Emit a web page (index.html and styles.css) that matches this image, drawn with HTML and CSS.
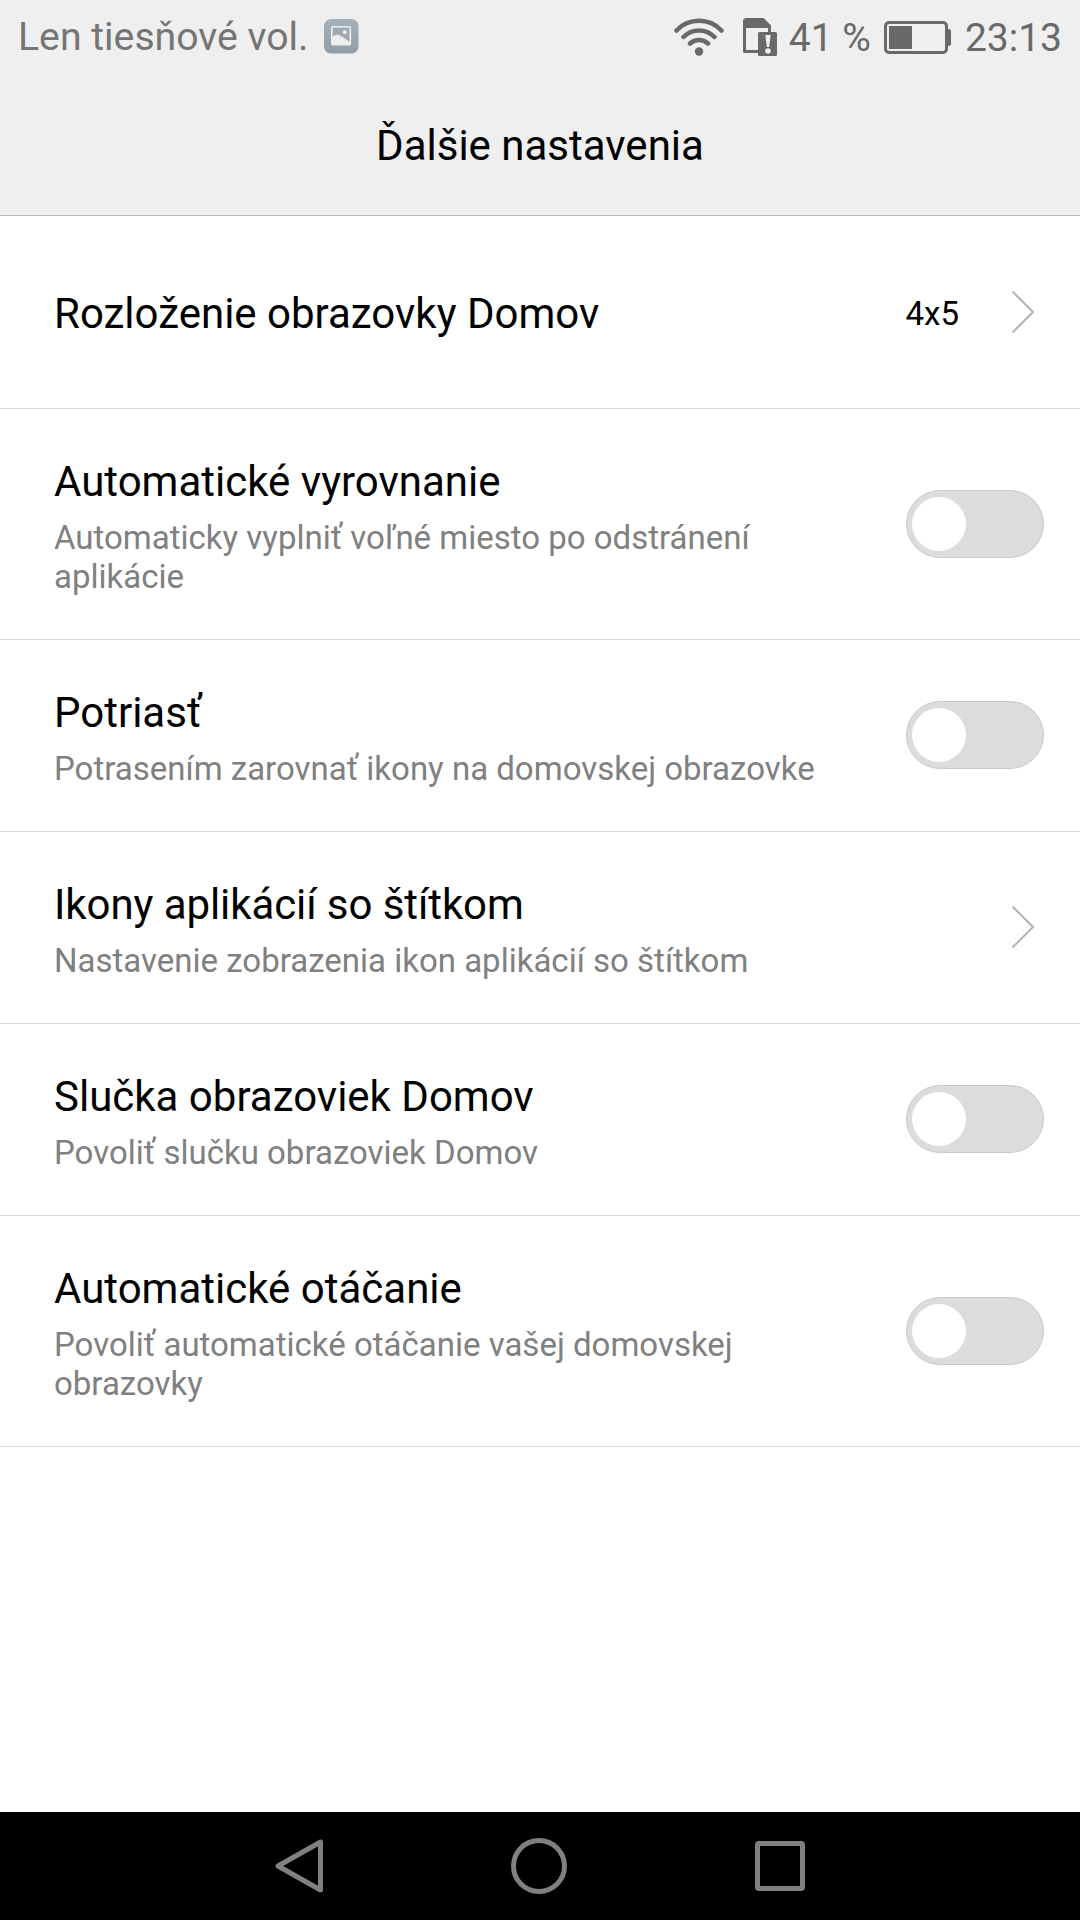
FILE: index.html
```html
<!DOCTYPE html>
<html lang="sk">

<head>
    <meta charset="utf-8">
    <meta name="viewport" content="width=device-width, initial-scale=1">
    <title>Ďalšie nastavenia</title>
    <link rel="stylesheet" href="styles.css">
</head>

<body>
    <header>
        <div class="statusbar">
            <span class="carrier">Len tiesňové vol.</span>
            <svg class="picture" width="35" height="35" viewBox="0 0 35 35">
                <defs>
                    <linearGradient id="shade" x1="0" y1="0" x2="0" y2="1">
                        <stop offset="0" stop-color="#a5b0b8"/>
                        <stop offset="1" stop-color="#939da5"/>
                    </linearGradient>
                </defs>
                <rect width="34.5" height="34.5" rx="7" fill="url(#shade)"/>
                <rect x="7.8" y="7.8" width="18.5" height="18" rx="1" fill="none" stroke="#eee" stroke-width="1.6"/>
                <path d="M8 18c2-1 3-2.5 6-2.5c2 0 2 2 4 2l8 5.500v3H8z" fill="#eee"/>
                <circle cx="20.7" cy="13.3" r="2" fill="#eee"/>
            </svg>
            <div class="status-right">
                <svg class="wifi" width="50" height="38" viewBox="0 0 50 38">
                    <path d="M2.5 12.5a31 31 0 0 1 45 0M9.5 19a21.7 21.7 0 0 1 31 0M16 25.500a13.300 13.300 0 0 1 18 0" fill="none" stroke="#696969" stroke-width="4.5" stroke-linecap="round"/>
                    <circle cx="25" cy="33.5" r="4.2" fill="#696969"/>
                </svg>
                <svg class="sim" width="34" height="38" viewBox="0 0 34 38">
                    <path d="M1.5 1.500h18.500l6.500 6.500v8M1.500 1.500v32h14" fill="none" stroke="#696969" stroke-width="3" stroke-linejoin="round"/>
                    <path d="M2 1h18l7 7v2H2z" fill="#696969"/>
                    <rect x="15" y="14" width="19" height="24" rx="1.5" fill="#696969"/>
                    <path d="M22.3 17h5.400l-1.500 12h-2.400z" fill="#efefef"/>
                    <circle cx="25" cy="33" r="2.8" fill="#efefef"/>
                </svg>
                <span class="percent">41 %</span>
                <svg class="battery" width="67" height="33" viewBox="0 0 67 33">
                    <rect x="1.5" y="1.5" width="61" height="30" rx="3.5" fill="none" stroke="#696969" stroke-width="3"/>
                    <path d="M5 5h23v23H5zM63 8h2.500l1.500 1.500v14l-1.500 1.500H63z" fill="#696969"/>
                </svg>
                <span class="time">23:13</span>
            </div>
        </div>
        <h1 class="title">Ďalšie nastavenia</h1>
    </header>

    <ul class="settings">
        <li class="one">
            <div class="text"><h2>Rozloženie obrazovky Domov</h2></div>
            <span class="value">4x5</span>
            <svg class="arrow" width="24" height="42" viewBox="0 0 24 42"><path d="M1.5 .5L22 21L1.5 41.5"/></svg>
        </li>
        <li class="two">
            <div class="text"><h2>Automatické vyrovnanie</h2><p>Automaticky vyplniť voľné miesto po odstránení<br>aplikácie</p></div>
            <div class="switch"></div>
        </li>
        <li>
            <div class="text"><h2>Potriasť</h2><p>Potrasením zarovnať ikony na domovskej obrazovke</p></div>
            <div class="switch"></div>
        </li>
        <li>
            <div class="text"><h2 class="tight">Ikony aplikácií so štítkom</h2><p>Nastavenie zobrazenia ikon aplikácií so štítkom</p></div>
            <svg class="arrow" width="24" height="42" viewBox="0 0 24 42"><path d="M1.5 .5L22 21L1.5 41.5"/></svg>
        </li>
        <li>
            <div class="text"><h2>Slučka obrazoviek Domov</h2><p>Povoliť slučku obrazoviek Domov</p></div>
            <div class="switch"></div>
        </li>
        <li class="two">
            <div class="text"><h2>Automatické otáčanie</h2><p>Povoliť automatické otáčanie vašej domovskej<br>obrazovky</p></div>
            <div class="switch"></div>
        </li>
    </ul>

    <nav class="navbar">
        <svg width="48" height="54" viewBox="0 0 48 54"><path d="M45.5 3v48L3 27z"/></svg>
        <svg width="56" height="56" viewBox="0 0 56 56"><circle cx="28" cy="28" r="25.5"/></svg>
        <svg width="50" height="50" viewBox="0 0 50 50"><rect x="2.5" y="2.5" width="45" height="45" rx="1.5"/></svg>
    </nav>
</body>
</html>
```
FILE: styles.css
```css
*{
    box-sizing: border-box;
}
body{
    margin: 0;
    width: 1080px;
    height: 1920px;
    display: flex;
    flex-direction: column;
    background: white;
    color: black;
    font-family: Roboto, sans-serif;
}
header {
    height: 216px;
    background: #efefef;
    border-bottom: 1px solid #b9b9b9;
}

/* status bar */
.statusbar {
    height: 73px;
    padding: 0 18px;
    display: flex;
    align-items: center;
    font-size: 39px;
    color: #696969;
}
.carrier {
    font-size: 39.2px;
    color: #757575;
}
.picture {
    margin-left: 16px;
}
.status-right {
    margin-left: auto;
    display: flex;
    align-items: center;
}
.percent, .time {
    padding-top: 2px;
}
.sim {
    margin: 0 12px 0 19px;
}
.battery {
    margin: 2px 14px 0 13px;
}
h1.title {
    margin: 0;
    padding-top: 48px;
    font-size: 42px;
    line-height: 50px;
    font-weight: normal;
    text-align: center;
}

/* list */
.settings {
    list-style: none;
    margin: 0;
    padding: 0;
    flex: 1;
}
.settings li {
    height: 192px;
    padding: 0 36px 1px 54px;
    display: flex;
    align-items: center;
    border-bottom: 1px solid #d9d9d9;
}
.settings li.one {
    height: 193px;
    padding-bottom: 0;
}
.settings li.two {
    height: 231px;
    padding-bottom: 0;
}
.text {
    flex: 1;
    padding-top: 5px;
}
.one .text {
    padding-top: 4px;
}
.one .value {
    padding-top: 2px;
}
h2 {
    margin: 0;
    font-size: 42px;
    line-height: 50px;
    font-weight: normal;
}
h2.tight {
    letter-spacing: -0.08px;
}
.text p {
    margin: 11px 0 0;
    font-size: 33px;
    line-height: 39px;
    color: #808080;
}
.value {
    margin-right: 52px;
    font-size: 33px;
}
.arrow {
    margin-right: 9px;
}
.arrow path {
    fill: none;
    stroke: #b3b3b3;
    stroke-width: 2;
}
.switch {
    width: 138px;
    height: 68px;
    padding: 6px 5px;
    border: 1px solid #c9c9c9;
    border-radius: 34px;
    background: #dcdcdc;
}
.switch::before {
    content: "";
    display: block;
    width: 54px;
    height: 54px;
    border-radius: 50%;
    background: white;
}

/* navigation keys */
.navbar {
    height: 108px;
    display: flex;
    align-items: center;
    justify-content: center;
    gap: 188px;
    background: black;
}
.navbar svg {
    fill: none;
    stroke: #808080;
    stroke-width: 5;
    stroke-linejoin: round;
}
```
